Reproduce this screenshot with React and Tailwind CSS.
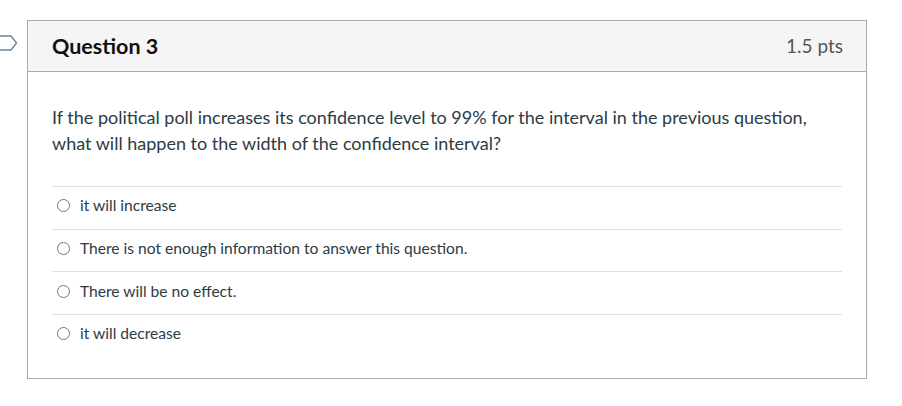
import React from "react";

const answers = [
  "it will increase",
  "There is not enough information to answer this question.",
  "There will be no effect.",
  "it will decrease",
];

function Flag() {
  return (
    <svg className="absolute left-0 top-[35px]" width="18" height="16" viewBox="0 0 18 16" fill="none">
      <path
        d="M-6 1 H11 L16.5 8 L11 15 H-6"
        stroke="#6a86a3"
        strokeWidth="1.4"
        strokeLinejoin="round"
      />
    </svg>
  );
}

export default function App() {
  return (
    <div className="relative w-[902px] h-[406px] bg-white font-['Lato','Noto_Sans',sans-serif] text-[#2d3b45]">
      <Flag />
      <div className="absolute left-[27px] top-[20px] w-[840px] border border-[#aaaaaa]">
        <div className="flex items-center justify-between h-[51px] bg-[#f5f5f5] border-b border-[#aaaaaa] pl-[24px] pr-[23px]">
          <span className="text-[21.5px] font-bold text-[#111]">Question 3</span>
          <span className="text-[19px] text-[#555]">1.5 pts</span>
        </div>
        <div className="px-[24px] pt-[32px] pb-[21px]">
          <p className="text-[18px] leading-[26px]">
            If the political poll increases its confidence level to 99% for the interval in the previous question,
            what will happen to the width of the confidence interval?
          </p>
          <div className="mt-[30px]">
            {answers.map((a) => (
              <div key={a} className="flex items-center h-[42.7px] pb-[4px] border-t border-[#e0e0e0]">
                <span className="ml-[5px] w-[13px] h-[13px] rounded-full border border-[#777] bg-white" />
                <span className="ml-[10px] text-[15.6px]">{a}</span>
              </div>
            ))}
          </div>
        </div>
      </div>
    </div>
  );
}
